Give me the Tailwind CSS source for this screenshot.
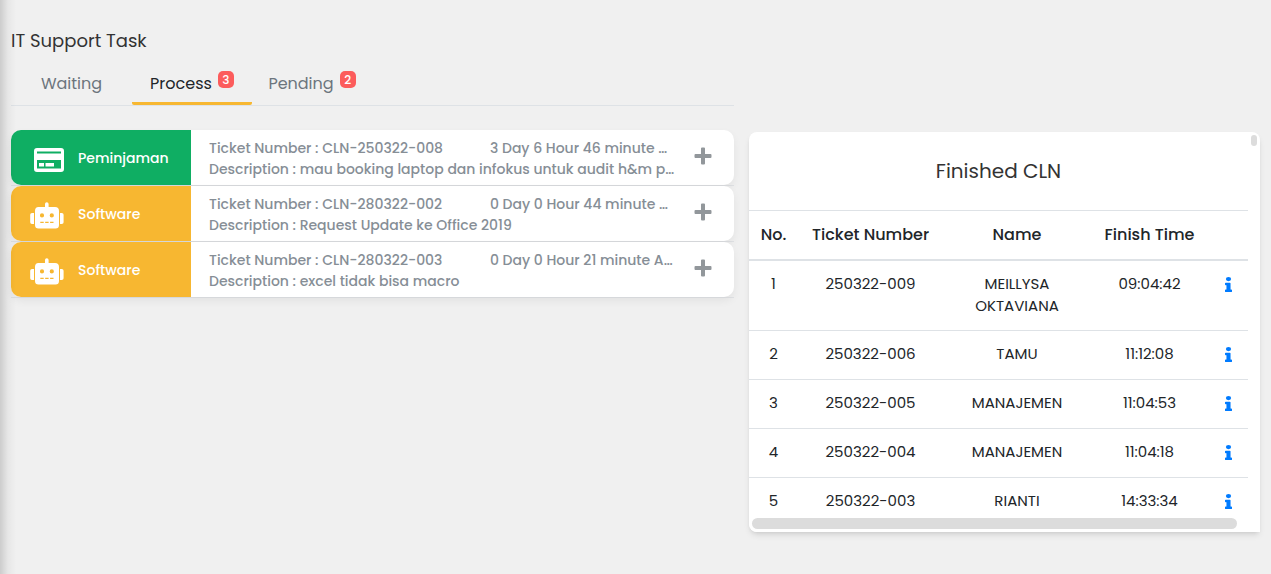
<!DOCTYPE html>
<html lang="en">
<head>
<meta charset="utf-8">
<meta name="viewport" content="width=device-width, initial-scale=1">
<title>IT Support Task</title>
<script src="https://cdn.jsdelivr.net/npm/@tailwindcss/browser@4"></script>
</head>
<body class="relative min-h-screen overflow-x-hidden bg-[#f0f0f0] font-[Poppins,Inter,sans-serif] text-[#212529]">
<svg class="hidden" aria-hidden="true">
  <symbol id="info" viewBox="0 0 192 512" preserveAspectRatio="none"><path fill="currentColor" d="M20 424h20V280H20c-11 0-20-9-20-20v-44c0-11 9-20 20-20h112c11 0 20 9 20 20v208h20c11 0 20 9 20 20v48c0 11-9 20-20 20H20c-11 0-20-9-20-20v-48c0-11 9-20 20-20zM96 0a72 72 0 1 0 0 144A72 72 0 0 0 96 0z"/></symbol>
  <symbol id="plus" viewBox="0 0 18 18"><path fill="currentColor" d="M8 0.500h2q1 0 1 1V7h5.500q1 0 1 1v2q0 1-1 1H11v5.500q0 1-1 1H8q-1 0-1-1V11H1.500q-1 0-1-1V8q0-1 1-1H7V1.500q0-1 1-1z"/></symbol>
  <symbol id="robot" viewBox="0 0 34 27"><path fill="currentColor" fill-rule="evenodd" d="M8.500 5H15V2q0-1.800 1.800-1.800T18.600 2v3H25q4 0 4 4v14q0 3.500-3.500 3.500h-17Q5 26.500 5 23V9q0-4 3.500-4zM12 11.300a2.100 2.100 0 1 0 0 4.200 2.100 2.100 0 0 0 0-4.200zM21.800 11.300a2.100 2.100 0 1 0 0 4.200 2.100 2.100 0 0 0 0-4.200zM10.300 19.800v1.200h3.400v-1.200zM15.200 19.800v1.200h3.400v-1.200zM20.100 19.800v1.200h3.400v-1.200zM2 11h2v11H2q-1.800 0-1.800-1.800v-7.400Q.2 11 2 11zM30 11h1.800q1.800 0 1.800 1.800v7.400q0 1.800-1.800 1.800H30z"/></symbol>
  <symbol id="card" viewBox="0 0 30 24"><path fill="currentColor" fill-rule="evenodd" d="M3 0h24q3 0 3 3v18q0 3-3 3H3q-3 0-3-3V3q0-3 3-3zM3 3.500v2h24V3.500zM3 12v8.500h24V12zM5 15h5v3.500H5zM11.500 15h8.500v3.500h-8.500z"/></symbol>
</svg>
<div class="pointer-events-none absolute inset-y-0 left-0 z-10 w-4 bg-linear-to-r from-black/15 via-black/4 to-transparent"></div>

<main class="px-[11px] pt-7">
  <h1 class="text-lg leading-6.5 text-[#333]">IT Support Task</h1>
  <div class="grid grid-cols-[723fr_511fr] items-start gap-[15px]">
    <section class="min-w-0 pt-2">
      <div role="tablist" class="flex h-11 border-b border-[#dee2e6] text-base text-[#6c757d]">
        <button role="tab" aria-selected="false" class="w-[121px]">Waiting</button>
        <button role="tab" aria-selected="true" class="flex w-30 items-center justify-center gap-1.5 rounded-b-xs border-b-3 border-[#f7b731] pt-[3px] text-[#212529]">Process<span class="-mt-2 h-[17px] w-4 rounded-[5px] bg-[#fc5c5c] text-center text-xs leading-[17px] font-medium text-white">3</span></button>
        <button role="tab" aria-selected="false" class="flex w-30 items-center justify-center gap-1.5">Pending<span class="-mt-2 h-[17px] w-4 rounded-[5px] bg-[#fc5c5c] text-center text-xs leading-[17px] font-medium text-white">2</span></button>
      </div>

      <ul class="mt-6 text-sm font-medium text-[#868e96]">
        <li class="border-b border-[#e0e2e5]">
          <article class="flex h-[55px] overflow-hidden rounded-[10px] bg-white shadow-[0_4px_8px_rgba(0,0,0,0.06)]">
            <div class="flex w-45 shrink-0 items-center bg-[#0fae63] text-white"><span class="ml-[19px] w-9 pl-1"><svg class="mt-1 h-6 w-[30px]"><use href="#card"/></svg></span><span class="ml-3">Peminjaman</span></div>
            <div class="min-w-0 flex-1 pt-2 pl-[18px] leading-[21px]">
              <div class="flex"><p class="w-[281px] shrink-0">Ticket Number : CLN-250322-008</p><p class="max-w-46 truncate">3 Day 6 Hour 46 minute Ago</p></div>
              <p class="truncate">Description : mau booking laptop dan infokus untuk audit h&amp;m pagi</p>
            </div>
            <button aria-label="Expand ticket" class="flex w-[57px] shrink-0 items-center justify-center pr-[5px] pb-1 text-[#92979b]"><svg class="size-[18px]"><use href="#plus"/></svg></button>
          </article>
        </li>
        <li class="border-b border-[#e0e2e5]">
          <article class="flex h-[55px] overflow-hidden rounded-[10px] bg-white shadow-[0_4px_8px_rgba(0,0,0,0.06)]">
            <div class="flex w-45 shrink-0 items-center bg-[#f7b731] text-white"><span class="ml-[19px] w-9"><svg class="mt-1 h-[27px] w-[34px]"><use href="#robot"/></svg></span><span class="ml-3">Software</span></div>
            <div class="min-w-0 flex-1 pt-2 pl-[18px] leading-[21px]">
              <div class="flex"><p class="w-[281px] shrink-0">Ticket Number : CLN-280322-002</p><p class="max-w-46 truncate">0 Day 0 Hour 44 minute Ago</p></div>
              <p class="truncate">Description : Request Update ke Office 2019</p>
            </div>
            <button aria-label="Expand ticket" class="flex w-[57px] shrink-0 items-center justify-center pr-[5px] pb-1 text-[#92979b]"><svg class="size-[18px]"><use href="#plus"/></svg></button>
          </article>
        </li>
        <li class="border-b border-[#e0e2e5]">
          <article class="flex h-[55px] overflow-hidden rounded-[10px] bg-white shadow-[0_4px_8px_rgba(0,0,0,0.06)]">
            <div class="flex w-45 shrink-0 items-center bg-[#f7b731] text-white"><span class="ml-[19px] w-9"><svg class="mt-1 h-[27px] w-[34px]"><use href="#robot"/></svg></span><span class="ml-3">Software</span></div>
            <div class="min-w-0 flex-1 pt-2 pl-[18px] leading-[21px]">
              <div class="flex"><p class="w-[281px] shrink-0">Ticket Number : CLN-280322-003</p><p class="max-w-46 truncate">0 Day 0 Hour 21 minute Ago</p></div>
              <p class="truncate">Description : excel tidak bisa macro</p>
            </div>
            <button aria-label="Expand ticket" class="flex w-[57px] shrink-0 items-center justify-center pr-[5px] pb-1 text-[#92979b]"><svg class="size-[18px]"><use href="#plus"/></svg></button>
          </article>
        </li>
      </ul>
    </section>

    <section class="relative mt-[78px] h-100 overflow-hidden rounded-lg rounded-br-none bg-white pr-3 shadow-md">
      <h2 class="h-[78px] pt-[23px] text-center text-xl leading-8 text-[#333]">Finished CLN</h2>
      <table class="w-full table-fixed border-separate border-spacing-0 text-center text-[15px] leading-[22px] [&_td]:border-t [&_td]:border-[#dee2e6] [&_td]:pt-3 [&_td]:pb-3.5 [&_td]:align-top [&_th]:border-t [&_th]:border-b [&_th]:border-[#dee2e6] [&_th]:py-[13px] [&_th]:text-base [&_th]:leading-[22px] [&_th]:font-medium">
        <colgroup><col class="w-[49px]"><col class="w-[145px]"><col class="w-[148px]"><col class="w-[117px]"><col class="w-[40px]"></colgroup>
        <thead><tr><th>No.</th><th>Ticket Number</th><th>Name</th><th>Finish Time</th><th><span class="sr-only">Info</span></th></tr></thead>
        <tbody>
          <tr class="[&>td]:pb-[13px]!"><td>1</td><td>250322-009</td><td>MEILLYSA<br>OKTAVIANA</td><td>09:04:42</td><td><a href="#" aria-label="Details" class="flex h-[22px] items-center justify-center text-[#007bff]"><svg class="h-[15px] w-[7px]"><use href="#info"/></svg></a></td></tr>
          <tr><td>2</td><td>250322-006</td><td>TAMU</td><td>11:12:08</td><td><a href="#" aria-label="Details" class="flex h-[22px] items-center justify-center text-[#007bff]"><svg class="h-[15px] w-[7px]"><use href="#info"/></svg></a></td></tr>
          <tr><td>3</td><td>250322-005</td><td>MANAJEMEN</td><td>11:04:53</td><td><a href="#" aria-label="Details" class="flex h-[22px] items-center justify-center text-[#007bff]"><svg class="h-[15px] w-[7px]"><use href="#info"/></svg></a></td></tr>
          <tr><td>4</td><td>250322-004</td><td>MANAJEMEN</td><td>11:04:18</td><td><a href="#" aria-label="Details" class="flex h-[22px] items-center justify-center text-[#007bff]"><svg class="h-[15px] w-[7px]"><use href="#info"/></svg></a></td></tr>
          <tr><td>5</td><td>250322-003</td><td>RIANTI</td><td>14:33:34</td><td><a href="#" aria-label="Details" class="flex h-[22px] items-center justify-center text-[#007bff]"><svg class="h-[15px] w-[7px]"><use href="#info"/></svg></a></td></tr>
        </tbody>
      </table>
      <div class="absolute top-[3px] right-[3px] h-[11px] w-1.5 rounded-full bg-[#dcdcdc]"></div>
      <div class="absolute inset-x-0 bottom-0 h-3.5 bg-white pr-[23px] pl-[3px]"><div class="h-[11px] rounded-full bg-[#dcdcdc]"></div></div>
    </section>
  </div>
</main>
</body>
</html>
